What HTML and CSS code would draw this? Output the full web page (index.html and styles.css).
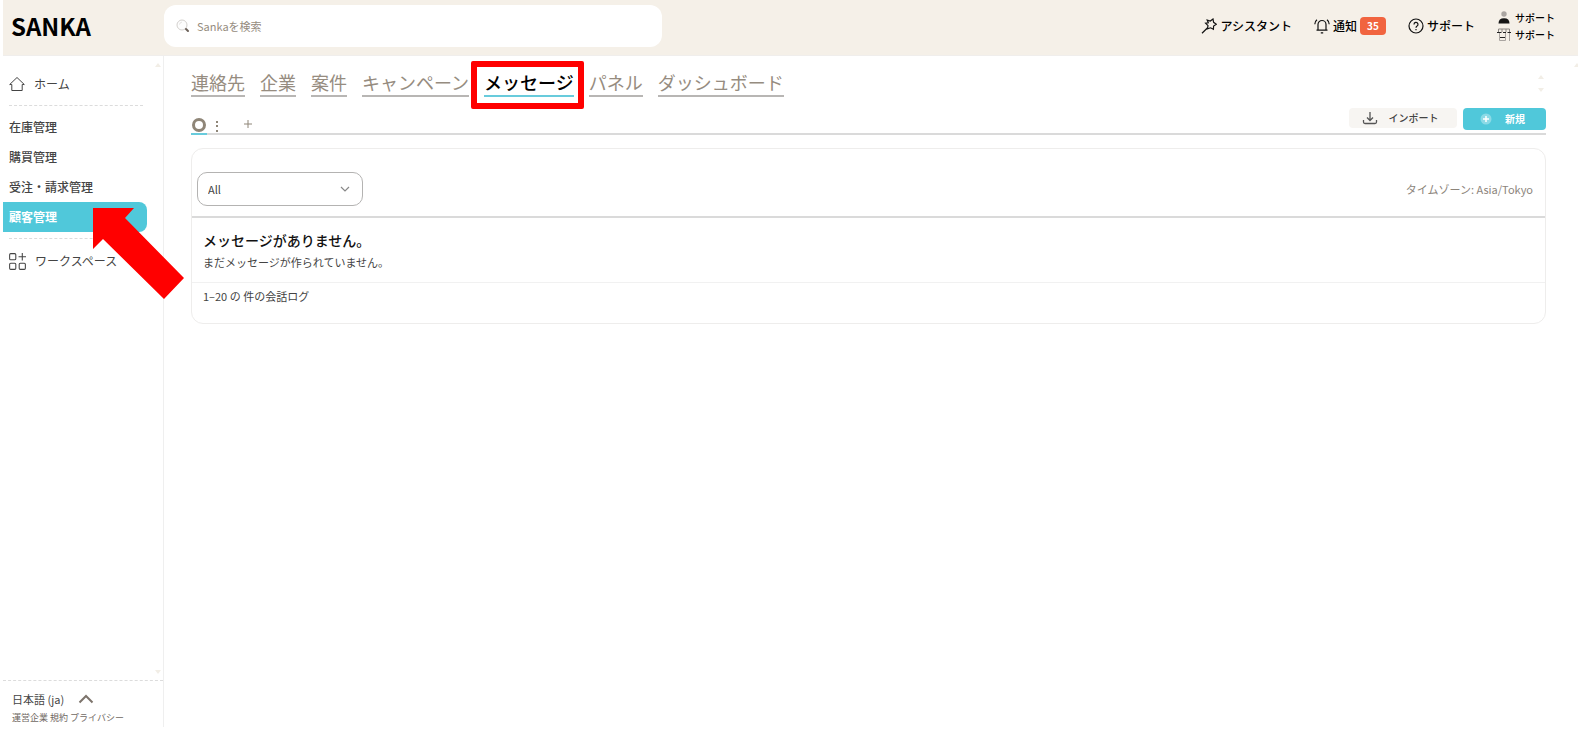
FILE: index.html
```html
<!DOCTYPE html>
<html lang="ja">
<head>
<meta charset="utf-8">
<title>SANKA</title>
<link rel="stylesheet" href="styles.css">
</head>
<body>
<div class="app">
  <header class="topbar">
    <a class="logo" href="#">SANKA</a>
    <label class="search">
      <svg class="icon-search" viewBox="0 0 14 14"><circle cx="6" cy="6" r="5" fill="#fdfdfd" stroke="#d3d0cd"/><path d="M3.5 5.5A3 3 0 0 1 6 3" fill="none" stroke="#e4e2e0"/><path d="M10 10l2 2" stroke="#6b6058" stroke-width="2" stroke-linecap="round"/></svg>
      <input type="search" placeholder="Sankaを検索" aria-label="Sankaを検索">
    </label>
    <nav class="top-actions">
      <a class="top-link" href="#">
        <svg class="icon-top" viewBox="0 0 16 16"><path d="M6.200 2.200L9.300 3 12 1 12.600 4.300 15.400 6.200 12.600 8 12.400 11.200 9.600 9.800 6.400 10.800 7 7.600 4.600 5.200 7.300 4.800zM6.600 9.800L1 15.200"/></svg>アシスタント
      </a>
      <a class="top-link" href="#">
        <svg class="icon-top" viewBox="0 0 16 16"><path d="M2.500 12.200h11M4 12V6.500a4 4 0 0 1 8 0V12M6.800 14.800h2.400M.8 6.200Q.8 3.400 3 1.800M15.200 6.200Q15.200 3.400 13 1.800"/></svg>通知<span class="badge">35</span>
      </a>
      <a class="top-link" href="#">
        <svg class="icon-top" viewBox="0 0 16 16"><circle cx="8" cy="8" r="7"/><path d="M6 6.400a2 2 0 1 1 3 1.700Q8 8.600 8 9.800M8 11v1.200"/></svg>サポート
      </a>
      <div class="account">
        <a class="account-link" href="#">
          <svg class="icon-account" viewBox="0 0 14 13"><circle cx="7" cy="3" r="2.700" fill="#aaa5a1"/><path d="M1.500 12.500Q1.500 7.300 7 7.300T12.500 12.500z" fill="#151515"/></svg>サポート
        </a>
        <a class="account-link" href="#">
          <svg class="icon-account" viewBox="0 0 14 13"><path d="M1.500 1H12.500V4M1.500 1V4M5 1V4M9 1V4" stroke="#8b8682"/><path d="M2.500 5V12.500H8.500V5M12.500 5V13" stroke="#aaa5a1"/><path d="M0 4.500H4.500M6 4.500H9M10.500 4.500H14M3 9.500H8" stroke="#222"/></svg>サポート
        </a>
      </div>
    </nav>
  </header>

  <div class="body">
    <aside class="sidebar">
      <nav class="side-nav">
        <a class="side-link" href="#">
          <svg class="icon-side" viewBox="0 0 16 16"><path d="M.7 8.500L8 1.500l7.300 7H13.200V14.500H2.800V8.500z"/></svg>ホーム
        </a>
        <hr class="side-rule">
        <a class="side-item" href="#">在庫管理</a>
        <a class="side-item" href="#">購買管理</a>
        <a class="side-item" href="#">受注・請求管理</a>
        <a class="side-item side-item-active" href="#">顧客管理</a>
        <hr class="side-rule side-rule-tight">
        <a class="side-link" href="#">
          <svg class="icon-side icon-grid" viewBox="0 0 16 16"><rect x=".6" y=".6" width="5.800" height="5.800" rx="1"/><rect x=".6" y="9.600" width="5.800" height="5.800" rx="1"/><rect x="9.600" y="9.600" width="5.800" height="5.800" rx="1"/><path d="M12.500 0v7M9 3.500h7"/></svg>ワークスペース
        </a>
      </nav>
      <span class="mark mark-up mark-side-top"></span>
      <span class="mark mark-down mark-side-bottom"></span>
      <footer class="side-foot">
        <button class="language" type="button">日本語 (ja)
          <svg class="icon-up" viewBox="0 0 16 10"><path d="M1.500 8.500L8 2l6.500 6.500"/></svg>
        </button>
        <div class="legal"><a href="#">運営企業</a> <a href="#">規約</a> <a href="#">プライバシー</a></div>
      </footer>
      <svg class="pointer" viewBox="0 0 92 92"><path d="M0 0H41L32 10L91 70L71 91L10 31L0 41z" fill="#f00"/></svg>
    </aside>

    <main class="main">
      <nav class="tabs">
        <a class="tab" href="#">連絡先</a>
        <a class="tab" href="#">企業</a>
        <a class="tab" href="#">案件</a>
        <a class="tab" href="#">キャンペーン</a>
        <a class="tab tab-active" href="#">メッセージ</a>
        <a class="tab" href="#">パネル</a>
        <a class="tab" href="#">ダッシュボード</a>
      </nav>
      <span class="mark mark-up mark-tabs-up"></span>
      <span class="mark mark-down mark-tabs-down"></span>
      <span class="mark mark-up mark-page-up"></span>

      <div class="toolbar">
        <div class="views">
          <button class="view view-active" type="button" aria-label="ビュー"><svg class="icon-ring" viewBox="0 0 14 14"><circle cx="7" cy="7" r="5.500"/></svg></button>
          <button class="view" type="button" aria-label="メニュー"><svg class="icon-dots" viewBox="0 0 4 14"><path d="M1 2h2v2H1zM1 6h2v2H1zM1 11h2v2H1z"/></svg></button>
          <button class="view view-add" type="button" aria-label="追加"><svg class="icon-plus" viewBox="0 0 10 10"><path d="M5 1v8M1 5h8"/></svg></button>
        </div>
        <div class="buttons">
          <button class="btn btn-import" type="button">
            <svg class="icon-import" viewBox="0 0 16 14"><path d="M8 1v8M5 6.500l3 3 3-3M1.500 9v2q0 1.500 1.500 1.500h10q1.500 0 1.500-1.500V9"/></svg>インポート
          </button>
          <button class="btn btn-new" type="button">
            <svg class="icon-new" viewBox="0 0 12 12"><circle cx="6" cy="6" r="5.500" fill="#8bdae6"/><path d="M6 3v6M3 6h6" stroke="#fff" stroke-width="1.500"/></svg>新規
          </button>
        </div>
      </div>

      <section class="card">
        <div class="card-head">
          <div class="select-wrap">
            <select class="select" aria-label="フィルター"><option>All</option></select>
            <svg class="icon-chevron" viewBox="0 0 10 6"><path d="M1 1l4 4 4-4"/></svg>
          </div>
          <span class="timezone">タイムゾーン: Asia/Tokyo</span>
        </div>
        <div class="empty">
          <h2 class="empty-title">メッセージがありません。</h2>
          <p class="empty-text">まだメッセージが作られていません。</p>
        </div>
        <p class="count">1–20 の 件の会話ログ</p>
      </section>
    </main>
  </div>
</div>
</body>
</html>
```
FILE: styles.css
```css
* { box-sizing: border-box; }

body {
  margin: 0;
  background: #fff;
  color: #444;
  font: 12px/20px "Noto Sans CJK JP", sans-serif;
}

a { color: inherit; text-decoration: none; }
button, input, select { font: inherit; color: inherit; border: 0; background: none; padding: 0; margin: 0; }
svg { display: block; flex: none; fill: none; }

.app {
  display: flex;
  flex-direction: column;
  height: 100vh;
  padding: 0 0 11px 3px;
  overflow: hidden;
}

/* Top bar */
.topbar {
  display: flex;
  align-items: center;
  flex: none;
  height: 56px;
  padding: 0 23px 4px 8px;
  background: #f5f0e8;
  border-bottom: 1px solid #f0eeec;
}
.logo {
  width: 153px;
  color: #000;
  font: bold 24px/32px "Noto Sans CJK JP", sans-serif;
}
.search {
  display: flex;
  align-items: center;
  gap: 7px;
  width: 33%;
  max-width: 498px;
  height: 42px;
  padding: 0 12px;
  background: #fff;
  border-radius: 12px;
}
.icon-search { width: 14px; height: 14px; }
.search input { flex: 1; outline: 0; font-size: 11px; }
.search input::placeholder { color: #968c80; opacity: 1; }
.top-actions {
  display: flex;
  align-items: center;
  gap: 22px;
  margin-left: auto;
  color: #000;
  font-weight: 500;
}
.top-link { display: flex; align-items: center; gap: 3px; }
.icon-top { width: 16px; height: 16px; stroke: #111; stroke-width: 1.2; }
.badge {
  width: 26px;
  border-radius: 4px;
  background: #f1643f;
  color: #fff;
  font-size: 10px;
  line-height: 18px;
  text-align: center;
  font-weight: 700;
}
.account { display: flex; flex-direction: column; }
.account-link { display: flex; align-items: center; gap: 4px; font-size: 10px; line-height: 17px; }
.icon-account { width: 14px; height: 13px; }

.body { display: flex; flex: 1; min-height: 0; }

/* Side bar */
.sidebar {
  position: relative;
  display: flex;
  flex-direction: column;
  justify-content: space-between;
  flex: none;
  width: 161px;
  border-right: 1px solid #efefef;
}
.side-nav { padding-top: 18px; }
.side-link { display: flex; align-items: center; gap: 9px; padding-left: 6px; }
.icon-side { width: 16px; height: 16px; stroke: #444; }
.icon-grid { width: 17px; height: 17px; }
.side-rule {
  margin: 11px 20px 6px 6px;
  border: 0;
  border-top: 1px dashed #dcdcdc;
}
.side-rule-tight { margin: 6px 20px 12px 6px; }
.side-item {
  display: block;
  margin-right: 16px;
  padding-left: 6px;
  line-height: 30px;
  font-weight: 500;
  border-radius: 0 8px 8px 0;
}
.side-item-active { background: #50c8da; color: #fff; font-weight: 700; }
.side-foot { padding: 9px 0 0 9px; border-top: 1px dashed #dcdcdc; }
.language { display: flex; align-items: center; gap: 14px; font-size: 11px; line-height: 18px; }
.icon-up { width: 16px; height: 10px; stroke: #7d746c; stroke-width: 2; }
.legal { font-size: 9px; line-height: 19px; color: #6f6862; }

.pointer {
  position: absolute;
  z-index: 2;
  top: 152px;
  left: 90px;
  width: 92px;
  height: 92px;
}

/* Scroll markers */
.mark {
  position: absolute;
  border: solid transparent;
  border-width: 0 3px;
}
.mark-up { border-bottom: 4px solid #f2eee6; }
.mark-down { border-top: 4px solid #f2eee6; }
.mark-side-top { top: 7px; right: 2px; }
.mark-side-bottom { bottom: 53px; right: 2px; }
.mark-tabs-up { top: 19px; right: 34px; }
.mark-tabs-down { top: 32px; right: 34px; }
.mark-page-up { top: 7px; right: -2px; }

/* Main area */
.main { position: relative; flex: 1; min-width: 0; padding: 13px 32px 0 27px; }
.tabs { display: flex; gap: 15px; color: #968c80; font-size: 18px; line-height: 26px; }
.tab { border-bottom: 2px solid #b8b6b4; }
.tab-active {
  position: relative;
  color: #000;
  font-weight: 500;
  border-color: #68cbdc;
}
.tab-active::after {
  content: "";
  position: absolute;
  inset: -8px -10px -14px -13px;
  border: 6px solid #f00;
  border-radius: 2px;
}

.toolbar {
  display: flex;
  justify-content: space-between;
  align-items: flex-end;
  height: 38px;
  border-bottom: 2px solid #dadada;
}
.views { display: flex; align-items: flex-end; margin-bottom: -2px; }
.view { padding: 0 0 2px; }
.view-active { padding: 0 1px; border-bottom: 2px solid #68cbdc; }
.icon-ring { width: 14px; height: 16px; stroke: #8f8678; stroke-width: 3; }
.icon-dots { width: 4px; height: 14px; margin-left: 8px; fill: #8f8678; }
.view-add { padding-bottom: 6px; margin-left: 24px; }
.icon-plus { width: 10px; height: 10px; stroke: #8f8678; }
.buttons { display: flex; align-items: flex-start; gap: 6px; padding-bottom: 3px; }
.btn {
  display: flex;
  align-items: center;
  justify-content: center;
  height: 20px;
  font-size: 10px;
  line-height: 20px;
  border-radius: 4px;
}
.btn-import { gap: 11px; width: 108px; background: #f7f5f2; font-weight: 500; padding-right: 6px; }
.btn-new { gap: 13px; width: 83px; height: 22px; padding-right: 4px; background: #50c8da; color: #fff; font-weight: 700; }
.icon-import { width: 16px; height: 14px; stroke: #555; stroke-width: 1.3; }
.icon-new { width: 12px; height: 12px; }

/* Message card */
.card { margin-top: 13px; border: 1px solid #eeedec; border-radius: 12px; }
.card-head {
  display: flex;
  align-items: center;
  justify-content: space-between;
  padding: 23px 12px 10px 5px;
  border-bottom: 2px solid #dadada;
}
.select-wrap { position: relative; width: 166px; }
.select {
  appearance: none;
  display: block;
  width: 100%;
  height: 34px;
  padding: 0 10px;
  border: 1px solid #b4b3b2;
  border-radius: 10px;
  background: #fff;
  font-size: 11px;
}
.icon-chevron {
  position: absolute;
  right: 13px;
  top: 14px;
  width: 10px;
  height: 6px;
  stroke: #888;
  stroke-width: 1.2;
  pointer-events: none;
}
.timezone { color: #8c847b; font-size: 11px; }
.empty { padding: 11px 11px 10px; border-bottom: 1px solid #f1f1f1; }
.empty-title { margin: 0; color: #111; font-size: 14px; line-height: 23px; font-weight: 500; }
.empty-text { margin: 0; font-size: 11px; line-height: 20px; }
.count { margin: 0; padding: 3px 11px 17px; font-size: 11px; }
```
